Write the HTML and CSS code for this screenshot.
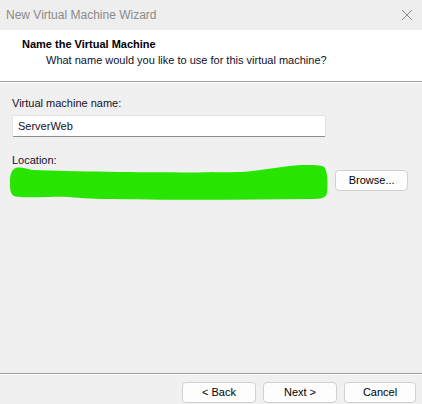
FILE: index.html
```html
<!DOCTYPE html>
<html>
<head>
<meta charset="utf-8">
<link rel="stylesheet" href="styles.css">
</head>
<body>
<div class="window">
  <div class="titlebar">
    <span class="title">New Virtual Machine Wizard</span>
    <svg class="close" width="12" height="12" viewBox="0 0 12 12"><path d="M1 1 L11 11 M11 1 L1 11" stroke="#8c8c8c" stroke-width="1" fill="none"/></svg>
  </div>
  <div class="header">
    <div class="h-title">Name the Virtual Machine</div>
    <div class="h-sub">What name would you like to use for this virtual machine?</div>
  </div>
  <div class="content">
    <div class="label">Virtual machine name:</div>
    <div class="input">ServerWeb</div>
    <div class="label loc-label">Location:</div>
    <div class="loc-row">
      <div class="loc-field">
        <svg class="blob" width="320" height="40" viewBox="0 0 320 40"><path d="M4 7 C8 4 14 6 22 8 C80 10 180 11 232 10 C255 8 272 4 292 3 C302 3 312 3 314 5 C318 8 318 25 317 31 C316 36 312 37 300 37 C230 38 150 38 92 37 C70 37 60 34 40 35 C24 35 8 36 4 34 C0 32 0 26 0 20 C0 14 1 9 4 7 Z" fill="#28e500"/></svg>
      </div>
      <div class="btn browse">Browse...</div>
    </div>
  </div>
  <div class="footer">
    <div class="btn">&lt; Back</div>
    <div class="btn">Next &gt;</div>
    <div class="btn cancel">Cancel</div>
  </div>
</div>
</body>
</html>
```
FILE: styles.css
```css
html, body {
  margin: 0;
  padding: 0;
}
body {
  width: 422px;
  height: 404px;
  overflow: hidden;
  background: #f0f0f0;
  font-family: "Liberation Sans", Arial, sans-serif;
  font-size: 11px;
  color: #000;
}
.window {
  display: flex;
  flex-direction: column;
  height: 404px;
}
.titlebar {
  height: 30px;
  background: #eeeeee;
  display: flex;
  align-items: center;
  justify-content: space-between;
  padding: 0 9px 0 6px;
}
.title {
  color: #8a8a8a;
  font-size: 12px;
}
.close {
  margin-top: -1px;
}
.header {
  background: #fff;
  height: 52px;
  box-sizing: border-box;
  padding: 6px 0 0 22px;
  border-bottom: 1px solid #a0a0a0;
  box-shadow: 0 1px 0 #ffffff;
}
.h-title {
  font-weight: bold;
  line-height: 16px;
}
.h-sub {
  line-height: 16px;
  padding-left: 24px;
  color: #10102a;
}
.content {
  flex: 1;
  padding: 13px 14px 0 12px;
  border-bottom: 1px solid #a0a0a0;
  box-shadow: 0 1px 0 #ffffff;
}
.label {
  line-height: 16px;
  color: #10102a;
}
.input {
  margin-top: 4px;
  width: 314px;
  height: 22px;
  box-sizing: border-box;
  background: #fff;
  border: 1px solid #e3e3e3;
  border-bottom-color: #8c8c8c;
  border-radius: 2px;
  padding: 0 5px;
  line-height: 20px;
  color: #10102a;
}
.loc-label {
  margin-top: 15px;
}
.loc-row {
  display: flex;
  align-items: flex-start;
}
.loc-field {
  width: 322px;
  height: 36px;
  margin-left: -2px;
  margin-top: -6px;
}
.blob {
  display: block;
}
.btn {
  width: 74px;
  height: 21px;
  box-sizing: border-box;
  background: #fdfdfd;
  border: 1px solid #d0d0d0;
  border-radius: 4px;
  text-align: center;
  line-height: 19px;
  color: #000;
}
.browse {
  width: 73px;
  margin-left: 5px;
  margin-top: 2px;
}
.cancel {
  width: 72px;
}
.footer {
  height: 30px;
  box-sizing: border-box;
  display: flex;
  justify-content: flex-end;
  gap: 7px;
  padding: 8px 6px 0 0;
}
```
